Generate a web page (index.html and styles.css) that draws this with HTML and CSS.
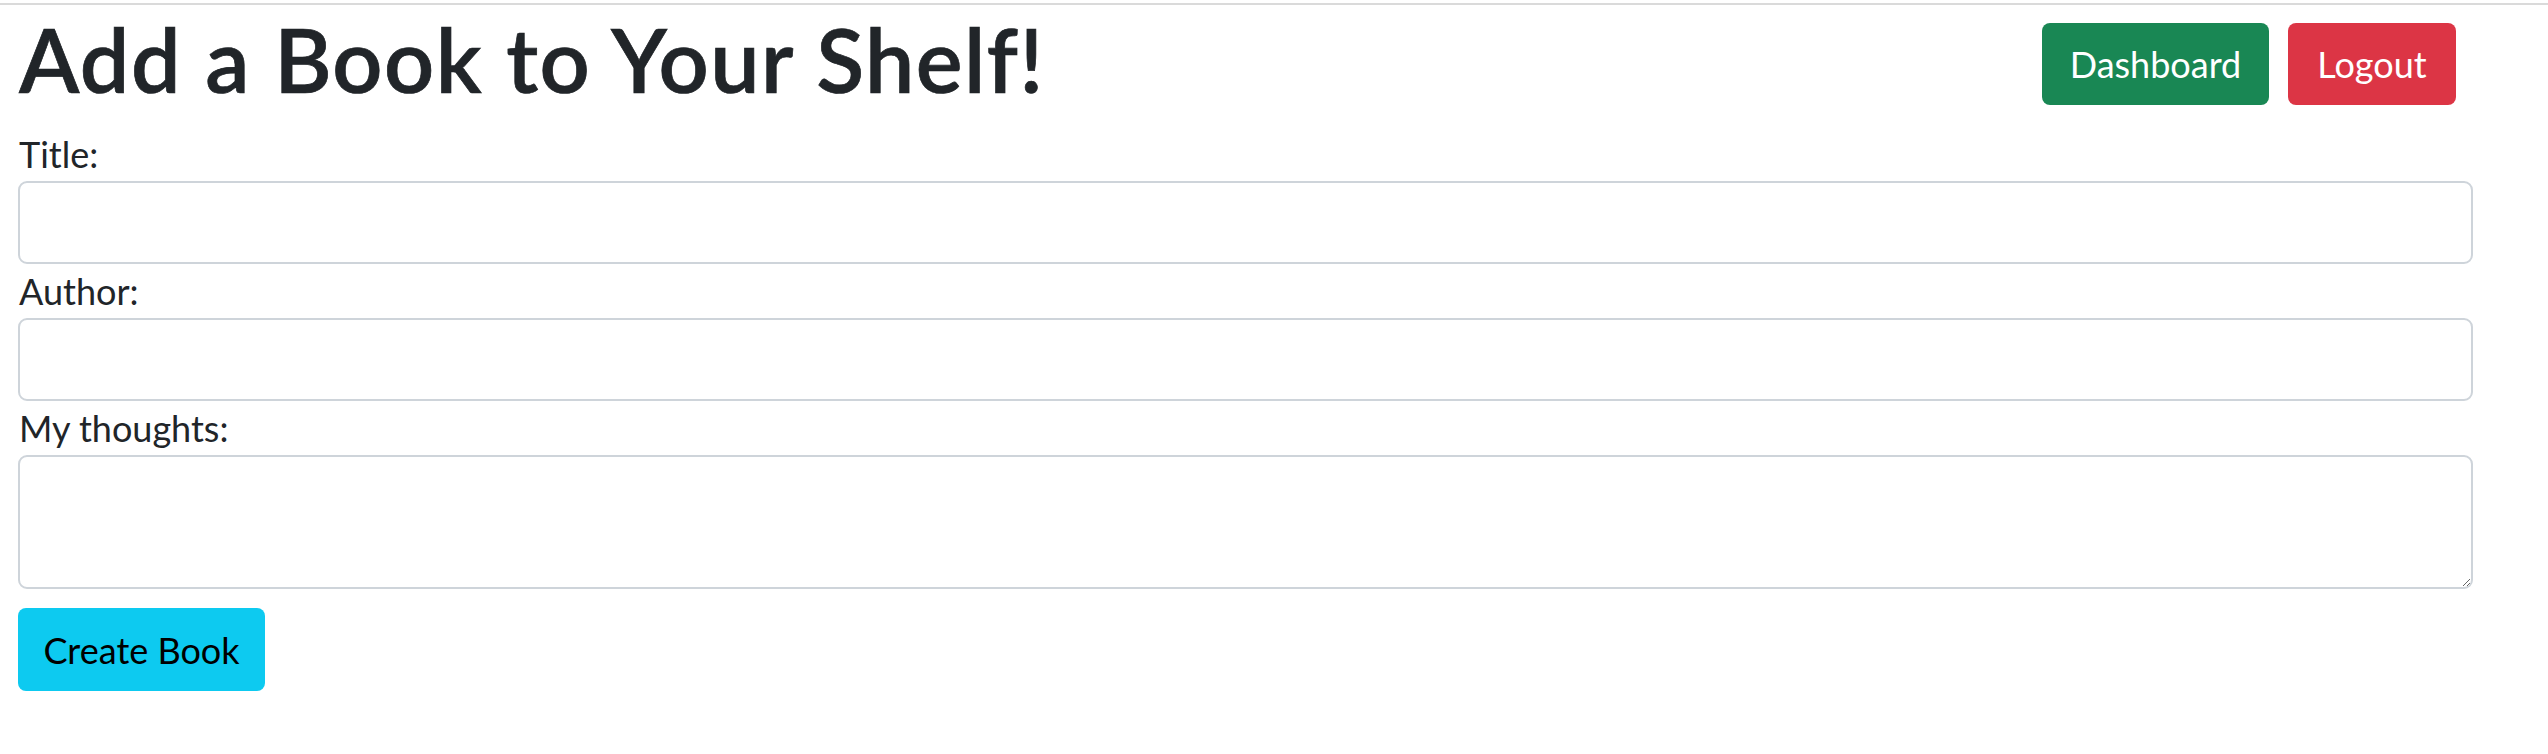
FILE: index.html
```html
<!DOCTYPE html>
<html lang="en">
<head>
<meta charset="utf-8">
<title>Add a Book</title>
<link rel="stylesheet" href="styles.css">
</head>
<body>
<div class="topline"></div>
<div class="page">
  <header class="header">
    <h1 class="title">Add a Book to Your Shelf!</h1>
    <nav class="actions">
      <a class="btn btn-dashboard" href="#">Dashboard</a>
      <a class="btn btn-logout" href="#">Logout</a>
    </nav>
  </header>
  <form class="book-form">
    <label class="field-label" for="title">Title:</label>
    <input class="field-input" id="title" type="text">
    <label class="field-label" for="author">Author:</label>
    <input class="field-input" id="author" type="text">
    <label class="field-label" for="thoughts">My thoughts:</label>
    <textarea class="field-area" id="thoughts"></textarea>
    <button class="btn btn-create" type="submit">Create Book</button>
  </form>
</div>
</body>
</html>
```
FILE: styles.css
```css
* { box-sizing: border-box; }
html, body { margin: 0; padding: 0; background: #fff; }
body {
  font-family: Lato, "Liberation Sans", sans-serif;
  color: #212529;
  font-size: 36px;
}
.topline {
  margin-top: 3px;
  height: 2px;
  background: #dadada;
}
.page {
  padding: 0 75px 0 18px;
}
.header {
  display: flex;
  justify-content: space-between;
  align-items: flex-start;
  margin-top: 1px;
  padding-right: 17px;
  height: 121px;
}
.title {
  margin: 0 0 0 1px;
  font-size: 88px;
  line-height: 106px;
  font-weight: 600;
  letter-spacing: 1.4px;
  -webkit-text-stroke: 0.7px #212529;
  color: #212529;
}
.actions {
  display: flex;
  gap: 19px;
  margin-top: 17px;
}
.btn {
  display: block;
  height: 82px;
  padding: 14px 0;
  line-height: 54px;
  font-size: 36px;
  font-family: inherit;
  text-align: center;
  text-decoration: none;
  border: 0;
  border-radius: 8px;
  color: #fff;
}
.btn-dashboard { width: 227px; background: #198754; }
.btn-logout { width: 168px; background: #dc3545; }
.book-form {
  display: flex;
  flex-direction: column;
  align-items: flex-start;
}
.field-label {
  display: block;
  line-height: 54px;
  margin-left: 1px;
}
.field-input, .field-area {
  display: block;
  width: 100%;
  height: 83px;
  border: 2px solid #ced4da;
  border-radius: 9px;
  font-size: 36px;
  font-family: inherit;
  padding: 12px 27px;
  background: #fff;
  margin: 0;
}
.field-area {
  height: 134px;
  resize: vertical;
}
.btn-create {
  margin-top: 19px;
  width: 247px;
  height: 83px;
  background: #0dcaf0;
  color: #000;
  cursor: pointer;
}
```
